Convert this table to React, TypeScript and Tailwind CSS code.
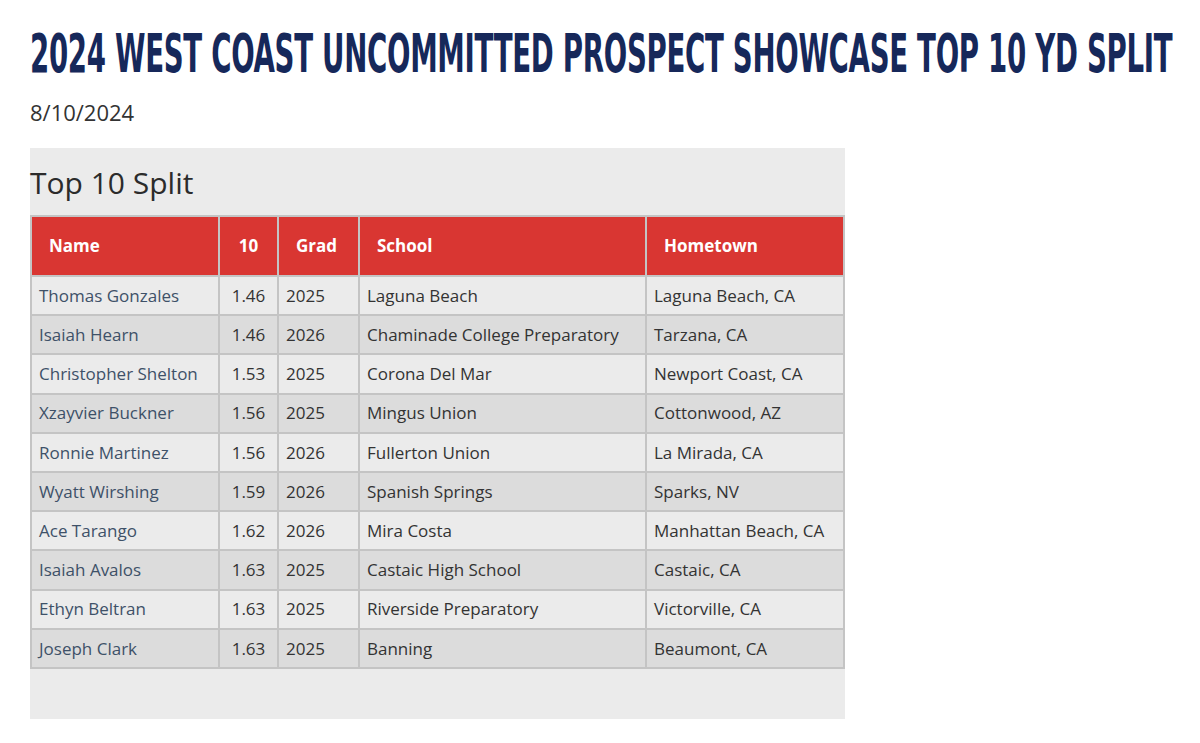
const rows = [
  ['Thomas Gonzales', '1.46', '2025', 'Laguna Beach', 'Laguna Beach, CA'],
  ['Isaiah Hearn', '1.46', '2026', 'Chaminade College Preparatory', 'Tarzana, CA'],
  ['Christopher Shelton', '1.53', '2025', 'Corona Del Mar', 'Newport Coast, CA'],
  ['Xzayvier Buckner', '1.56', '2025', 'Mingus Union', 'Cottonwood, AZ'],
  ['Ronnie Martinez', '1.56', '2026', 'Fullerton Union', 'La Mirada, CA'],
  ['Wyatt Wirshing', '1.59', '2026', 'Spanish Springs', 'Sparks, NV'],
  ['Ace Tarango', '1.62', '2026', 'Mira Costa', 'Manhattan Beach, CA'],
  ['Isaiah Avalos', '1.63', '2025', 'Castaic High School', 'Castaic, CA'],
  ['Ethyn Beltran', '1.63', '2025', 'Riverside Preparatory', 'Victorville, CA'],
  ['Joseph Clark', '1.63', '2025', 'Banning', 'Beaumont, CA'],
];

export default function App() {
  return (
    <div className="min-h-[743px] overflow-hidden bg-white px-[30px] pt-[28px] font-['Open_Sans',sans-serif] text-[#333]">
      {/* Title: condensed display face approximated by squeezing a bold sans */}
      <h1 className="h-[52px] whitespace-nowrap">
        <span className="inline-block origin-left scale-x-[0.579] font-['DejaVu_Sans_Condensed','DejaVu_Sans',sans-serif] text-[53px] font-bold uppercase leading-[52px] tracking-[-0.5px] text-[#16285a]">
          2024 West Coast Uncommitted Prospect Showcase Top 10 YD Split
        </span>
      </h1>
      <p className="mt-[17px] text-[22px] leading-[30px] text-[#333]">8/10/2024</p>

      {/* Results panel */}
      <div className="mt-[21px] h-[571px] w-[815px] bg-[#ebebeb]">
        <h2 className="pt-[16px] pb-[14px] text-[30px] leading-[37px] text-[#2b2b2b]">Top 10 Split</h2>
        <table className="w-[813px] table-fixed border-collapse text-[17px]">
          <colgroup>
            <col className="w-[188px]" />
            <col className="w-[59px]" />
            <col className="w-[81px]" />
            <col className="w-[287px]" />
            <col className="w-[198px]" />
          </colgroup>
          <thead>
            <tr className="h-[60px] bg-[#d93632] text-white">
              <th className="border-2 border-[#c4c4c4] pl-[17px] text-left font-bold">Name</th>
              <th className="border-2 border-[#c4c4c4] text-center font-bold">10</th>
              <th className="border-2 border-[#c4c4c4] pl-[17px] text-left font-bold">Grad</th>
              <th className="border-2 border-[#c4c4c4] pl-[17px] text-left font-bold">School</th>
              <th className="border-2 border-[#c4c4c4] pl-[17px] text-left font-bold">Hometown</th>
            </tr>
          </thead>
          <tbody>
            {rows.map((r, i) => (
              <tr key={r[0]} className={i % 2 === 0 ? 'h-[39.2px] bg-[#ebebeb]' : 'h-[39.2px] bg-[#dcdcdc]'}>
                <td className="border-2 border-[#c4c4c4] pl-[7px] text-[#3e5168]">{r[0]}</td>
                <td className="border-2 border-[#c4c4c4] text-center">{r[1]}</td>
                <td className="border-2 border-[#c4c4c4] pl-[7px]">{r[2]}</td>
                <td className="border-2 border-[#c4c4c4] pl-[7px]">{r[3]}</td>
                <td className="border-2 border-[#c4c4c4] pl-[7px]">{r[4]}</td>
              </tr>
            ))}
          </tbody>
        </table>
      </div>
    </div>
  );
}
